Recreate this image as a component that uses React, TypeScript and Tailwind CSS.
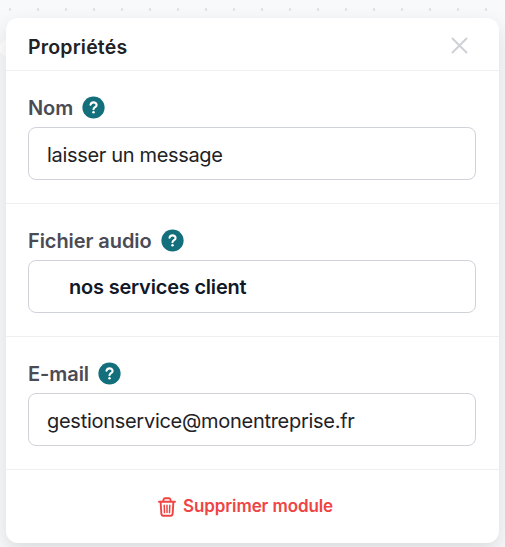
import React from "react";

type FieldProps = {
  label: string;
  children: React.ReactNode;
};

const HelpIcon = () => (
  <svg className="mb-px size-[23px]" viewBox="0 0 23 23" fill="none">
    <circle cx="11.5" cy="11.5" r="11.1" fill="#136f7b" />
    <path d="M8.5 8.7c.4-1.5 1.5-2.3 3-2.3 1.8 0 3.1 1 3.1 2.6 0 2.3-3.1 2.1-3.1 4.3" stroke="#fff" strokeWidth="2.1" strokeLinecap="round" />
    <circle cx="11.5" cy="16.3" r="1.25" fill="#fff" />
  </svg>
);

const TrashIcon = () => (
  <svg className="h-5 w-[18px]" viewBox="0 0 18 20" fill="none" stroke="currentColor" strokeLinecap="round" strokeLinejoin="round">
    <path d="M1 4.8h16M2.6 5l.8 12.2c.1.9.7 1.6 1.6 1.6h8c.9 0 1.5-.7 1.6-1.6L15.4 5M5 4.5l.7-2.3c.2-.6.6-.9 1.2-.9h4.2c.6 0 1 .3 1.2.9l.7 2.3" strokeWidth="1.9" />
    <path d="M6.2 8.2l.3 7.4M9 8.2v7.4M11.8 8.2l-.3 7.4" strokeWidth="1.5" />
  </svg>
);

const Field = ({ label, children }: FieldProps) => {
  return (
    <section className="h-[133px] border-b border-[#eeeff1] px-[22px] pt-[23px]">
      <div className="flex h-7 items-center gap-[9px]">
        <label className="text-[20px] leading-7 font-semibold tracking-[-0.07px] text-[#4b4b55]">{label}</label>
        <HelpIcon />
      </div>
      <div className="mt-[5px] flex h-[53px] w-[448px] items-center rounded-[8px] border border-[#d0d2da] px-[18px] pt-[2px] text-[20px] text-[#222225]">
        {children}
      </div>
    </section>
  );
};

const App = () => {
  return (
    <div className="relative h-[547px] w-[505px] overflow-hidden bg-[#f8f9fb] pt-[18px] pl-[6px] font-['Inter',sans-serif]">
      <div className="absolute top-0 left-[-4px] h-[18px] w-[509px] bg-[radial-gradient(circle_at_14px_9.5px,#dfe1e4_1px,transparent_1.6px)] bg-[length:28px_28px]" />
      <div className="absolute top-[40px] left-[0px] size-4 rotate-45 bg-white" />

      <div className="relative h-[525px] w-[493px] rounded-[12px] bg-white shadow-[0_8px_20px_rgba(0,0,0,0.12)]">
        <header className="flex h-[53px] items-center justify-between border-b border-[#eeeff1] pt-[6px] pr-[31px] pl-[22px]">
          <h1 className="text-[19.5px] leading-7 font-semibold tracking-[0.01em] text-[#222225]">Propriétés</h1>
          <button aria-label="Fermer" className="pb-[3px]">
            <svg className="size-[17px]" viewBox="0 0 17 17" fill="none" stroke="#cfd1d8" strokeWidth="2" strokeLinecap="round">
              <path d="M1.5 1.5l14 14M15.5 1.5l-14 14" />
            </svg>
          </button>
        </header>

        <Field label="Nom">
          <span className="tracking-[-0.33px]">laisser un message</span>
        </Field>
        <Field label="Fichier audio">
          <span className="pb-[2px] pl-[22px] font-semibold tracking-[-0.2px] text-[#111827]">nos services client</span>
        </Field>
        <Field label="E-mail">
          <span className="tracking-[-0.28px]">gestionservice@monentreprise.fr</span>
        </Field>

        <footer className="flex h-[73px] items-center justify-center gap-[7px] pr-[14px] text-[#ef4444]">
          <TrashIcon />
          <span className="text-[17px] font-semibold tracking-[-0.1px]">Supprimer module</span>
        </footer>
      </div>
    </div>
  );
};

export default App;
